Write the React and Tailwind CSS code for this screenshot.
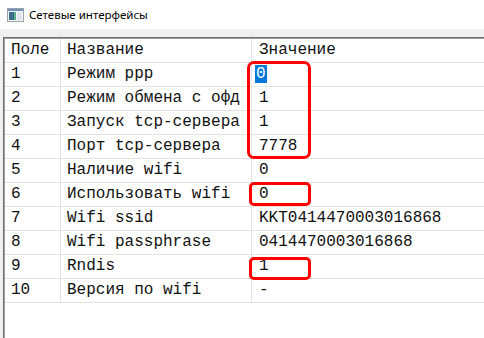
import React from 'react';

const rows = [
    ['1', 'Режим ppp', '0'],
    ['2', 'Режим обмена с офд', '1'],
    ['3', 'Запуск tcp-сервера', '1'],
    ['4', 'Порт tcp-сервера', '7778'],
    ['5', 'Наличие wifi', '0'],
    ['6', 'Использовать wifi', '0'],
    ['7', 'Wifi ssid', 'KKT0414470003016868'],
    ['8', 'Wifi passphrase', '0414470003016868'],
    ['9', 'Rndis', '1'],
    ['10', 'Версия по wifi', '-'],
];

const WindowIcon = () => (
    <svg width="17" height="14" viewBox="0 0 17 14">
        <rect x="0.5" y="0.5" width="16" height="13" fill="#f4f6f8" stroke="#9aa3ad" />
        <rect x="1" y="1" width="15" height="2" fill="#6f8fb8" />
        <rect x="2" y="4" width="5" height="8" fill="#3d6f8e" />
        <rect x="7" y="4" width="2" height="8" fill="#5fae8c" />
        <rect x="10" y="4" width="5" height="8" fill="#dfe6ee" />
    </svg>
);

const App = () => {
    return (
        <div className="w-[484px] h-[338px] bg-white flex flex-col overflow-hidden relative" style={{ fontFamily: '"Liberation Mono", monospace' }}>
            <div className="h-[29px] flex items-center pl-[7px] gap-[5px] bg-white">
                <WindowIcon />
                <span className="text-[11.5px] text-black" style={{ fontFamily: '"Noto Sans", sans-serif' }}>Сетевые интерфейсы</span>
            </div>
            <div className="h-[8px] bg-[#f0f0f0]" />
            <div className="flex-1 flex bg-[#f0f0f0]">
                <div className="w-[3px]" />
                <div className="flex-1 bg-white border-t border-l border-[#6e6e6e]">
                    <div className="border-t border-l border-[#a0a0a0] h-full text-[16px] text-[#111]">
                        <div className="flex h-[24px] border-b border-[#e3e3e3] leading-[23px]">
                            <div className="w-[56px] border-r border-[#e3e3e3] pl-[6px]">Поле</div>
                            <div className="w-[191px] border-r border-[#e3e3e3] pl-[6px]">Название</div>
                            <div className="flex-1 pl-[7px]">Значение</div>
                        </div>
                        {rows.map((r, i) => (
                            <div key={r[0]} className="flex h-[24px] border-b border-[#e3e3e3] leading-[23px]">
                                <div className="w-[56px] border-r border-[#e3e3e3] pl-[6px]">{r[0]}</div>
                                <div className="w-[191px] border-r border-[#e3e3e3] pl-[6px] whitespace-nowrap overflow-hidden">{r[1]}</div>
                                <div className="flex-1 pl-[7px] whitespace-nowrap">
                                    {i === 0 ? (
                                        <span className="bg-[#0078d7] text-white ml-[-4px] px-[1px] inline-block leading-[18px]">{r[2]}</span>
                                    ) : r[2]}
                                </div>
                            </div>
                        ))}
                    </div>
                </div>
            </div>
            <div className="absolute left-[247px] top-[61px] w-[64px] h-[98px] border-[3px] border-[#ff0000] rounded-[7px]" />
            <div className="absolute left-[249px] top-[182px] w-[62px] h-[24px] border-[3px] border-[#ff0000] rounded-[5px]" />
            <div className="absolute left-[249px] top-[257px] w-[62px] h-[23px] border-[3px] border-[#ff0000] rounded-[5px]" />
        </div>
    );
};

export default App;
